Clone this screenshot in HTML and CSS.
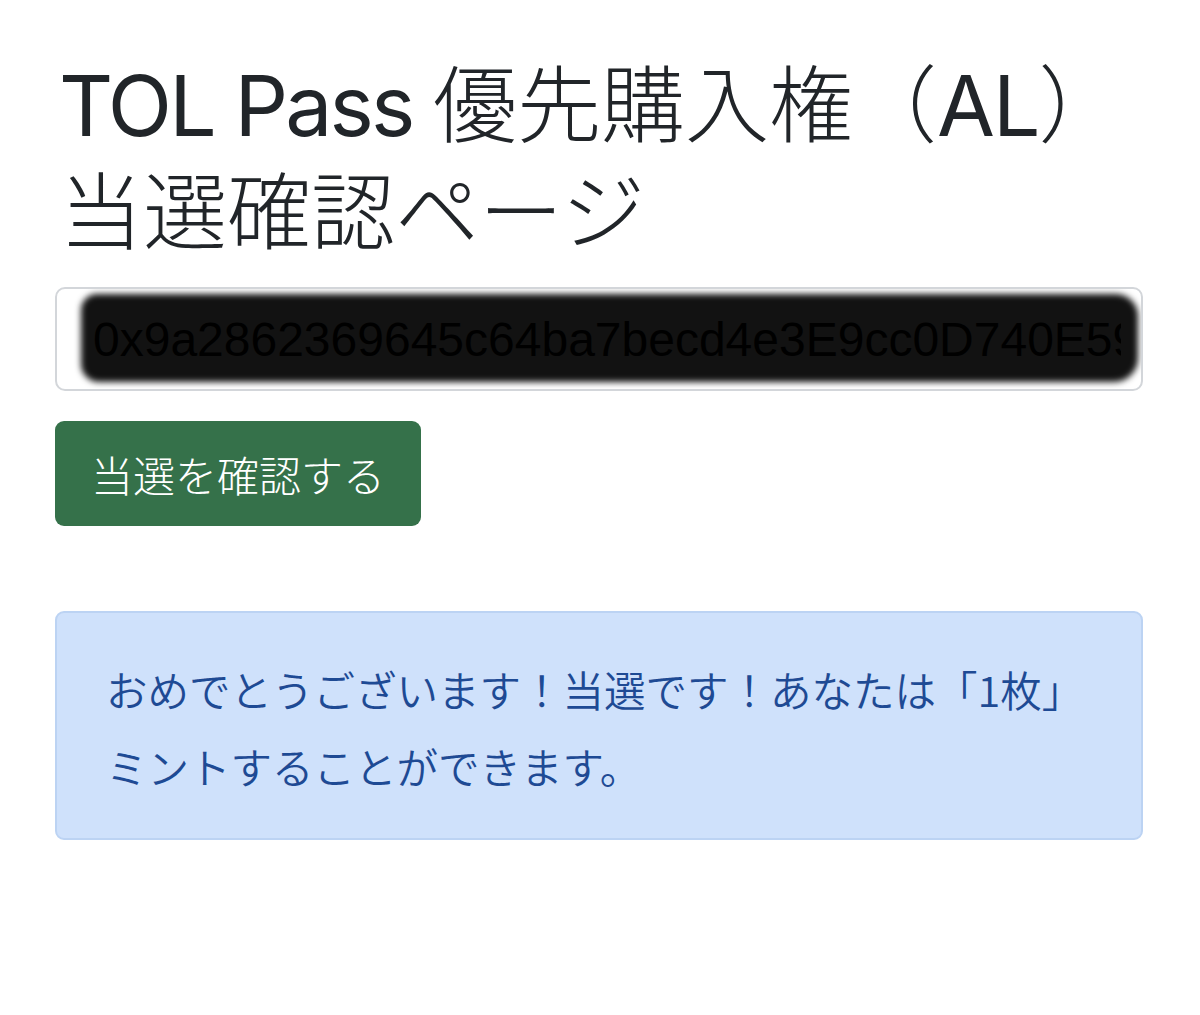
FILE: index.html
```html
<!DOCTYPE html>
<html lang="ja">
<head>
<meta charset="utf-8">
<title>TOL Pass 優先購入権（AL）当選確認ページ</title>
<link rel="stylesheet" href="styles.css">
</head>
<body>
<main class="page">
  <h1 class="title"><span class="line"><span class="latin">TOL Pass </span>優先購入権（<span class="latin-short">AL</span>）</span><span class="line">当選確認ページ</span></h1>
  <div class="field">
    <div class="redact"></div>
    <input class="address" type="text" value="0x9a2862369645c64ba7becd4e3E9cc0D740E59" readonly>
  </div>
  <button class="check" type="button">当選を確認する</button>
  <div class="alert">おめでとうございます！当選です！あなたは「1枚」<br>ミントすることができます。</div>
</main>
</body>
</html>
```

FILE: styles.css
```css
html, body {
  margin: 0;
  padding: 0;
  background: #ffffff;
}

body {
  font-family: "Inter", "Noto Sans CJK JP", sans-serif;
  color: #212529;
}

.page {
  width: 1088px;
  padding: 52px 0 0 55px;
  display: flex;
  flex-direction: column;
  align-items: flex-start;
}

.title {
  margin: 0;
  display: flex;
  flex-direction: column;
  font-family: "Inter", "Noto Sans CJK JP", sans-serif;
  font-weight: 300;
  font-size: 84px;
  line-height: 107px;
  color: #212529;
  padding-left: 4px;
}

.line {
  white-space: nowrap;
}

.latin {
  letter-spacing: -2.9px;
  font-weight: 400;
}

.latin-short {
  letter-spacing: -2px;
  font-weight: 400;
}

.field {
  position: relative;
  width: 1088px;
  height: 104px;
  margin-top: 21px;
  box-sizing: border-box;
  border: 2px solid #d3d6da;
  border-radius: 10px;
  overflow: hidden;
}

.redact {
  position: absolute;
  left: 24px;
  right: 3px;
  top: 5px;
  bottom: 7px;
  background: #121212;
  border-radius: 16px 22px 24px 18px;
  filter: blur(3px);
}

.address {
  position: relative;
  z-index: 1;
  width: 100%;
  height: 100%;
  box-sizing: border-box;
  border: 0;
  outline: none;
  background: transparent;
  padding: 0 20px 0 36px;
  font-family: "Liberation Sans", Arial, sans-serif;
  font-size: 48px;
  color: #000000;
}

.check {
  margin-top: 30px;
  height: 105px;
  padding: 0 36px;
  border: 0;
  border-radius: 9px;
  background: #35714a;
  color: #ffffff;
  font-family: "Noto Sans CJK JP", sans-serif;
  font-size: 42px;
  font-weight: 300;
}

.alert {
  margin-top: 85px;
  width: 1088px;
  height: 229px;
  box-sizing: border-box;
  padding: 38px 0 0 49px;
  background: #cfe1fb;
  border: 2px solid #bcd3f3;
  border-radius: 9px;
  color: #1e4a94;
  font-family: "Noto Sans CJK JP", sans-serif;
  font-size: 41.5px;
  font-weight: 350;
  line-height: 77px;
}
```
